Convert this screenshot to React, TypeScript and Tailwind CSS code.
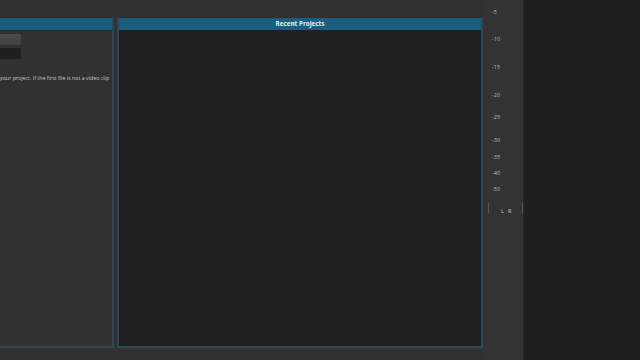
const SCALE = [
  { label: '-5', y: 10 },
  { label: '-10', y: 37 },
  { label: '-15', y: 65 },
  { label: '-20', y: 93 },
  { label: '-25', y: 115 },
  { label: '-30', y: 138 },
  { label: '-35', y: 155 },
  { label: '-40', y: 171 },
  { label: '-50', y: 187 },
]

export default function App() {
  return (
    <div
      className="flex h-[360px] w-[640px] overflow-hidden bg-[#313131] text-[#cfcfcf]"
      style={{ fontFamily: '"Open Sans", "Noto Sans", sans-serif' }}
    >
      {/* Left + center panels */}
      <div className="flex w-[483px] shrink-0 gap-[3px] pt-[18px] pb-[12px]">
        {/* Wizard panel */}
        <section className="flex w-[114px] shrink-0 flex-col border-r-2 border-b-2 border-[#2c4858]">
          <div className="h-[12px] shrink-0 bg-[#1b5d7c]" />
          <div className="flex flex-1 flex-col pt-[4px]">
            <div className="h-[11px] w-[21px] rounded-r-[2px] bg-gradient-to-b from-[#4d4d4d] to-[#3f3f3f]" />
            <div className="mt-[3px] h-[11px] w-[21px] rounded-r-[2px] bg-[#1e1e1e]" />
            <p className="mt-[15px] whitespace-nowrap text-[5.3px] leading-[8px] text-[#c8c8c8]">
              your project. If the first file is not a video clip
            </p>
          </div>
        </section>

        {/* Recent projects */}
        <section className="flex flex-1 flex-col border-x-2 border-b-2 border-[#2c4858]">
          <div className="flex h-[12px] shrink-0 items-center justify-center bg-[#1b5d7c] text-[6.3px] font-bold text-[#e8eef2]">
            Recent Projects
          </div>
          <div className="flex-1 bg-[#202020]" />
        </section>
      </div>

      {/* Audio meter */}
      <div className="relative w-[40px] shrink-0 bg-[#333333]">
        {SCALE.map((s) => (
          <span
            key={s.label}
            className="absolute left-[9px] text-[5.5px] leading-none text-[#bdbdbd]"
            style={{ top: s.y }}
          >
            {s.label}
          </span>
        ))}
        <div className="absolute left-[5px] top-[203px] h-[10px] w-px bg-[#5a5a5a]" />
        <div className="absolute right-0 top-[203px] h-[10px] w-px bg-[#5a5a5a]" />
        <div className="absolute left-[18px] top-[207px] flex gap-[4px] text-[5.5px] text-[#c8c8c8]">
          <span>L</span>
          <span>R</span>
        </div>
      </div>

      {/* Preview area */}
      <div className="flex-1 border-l border-[#2a2a2a] bg-[#1f1f1f]" />
    </div>
  )
}
